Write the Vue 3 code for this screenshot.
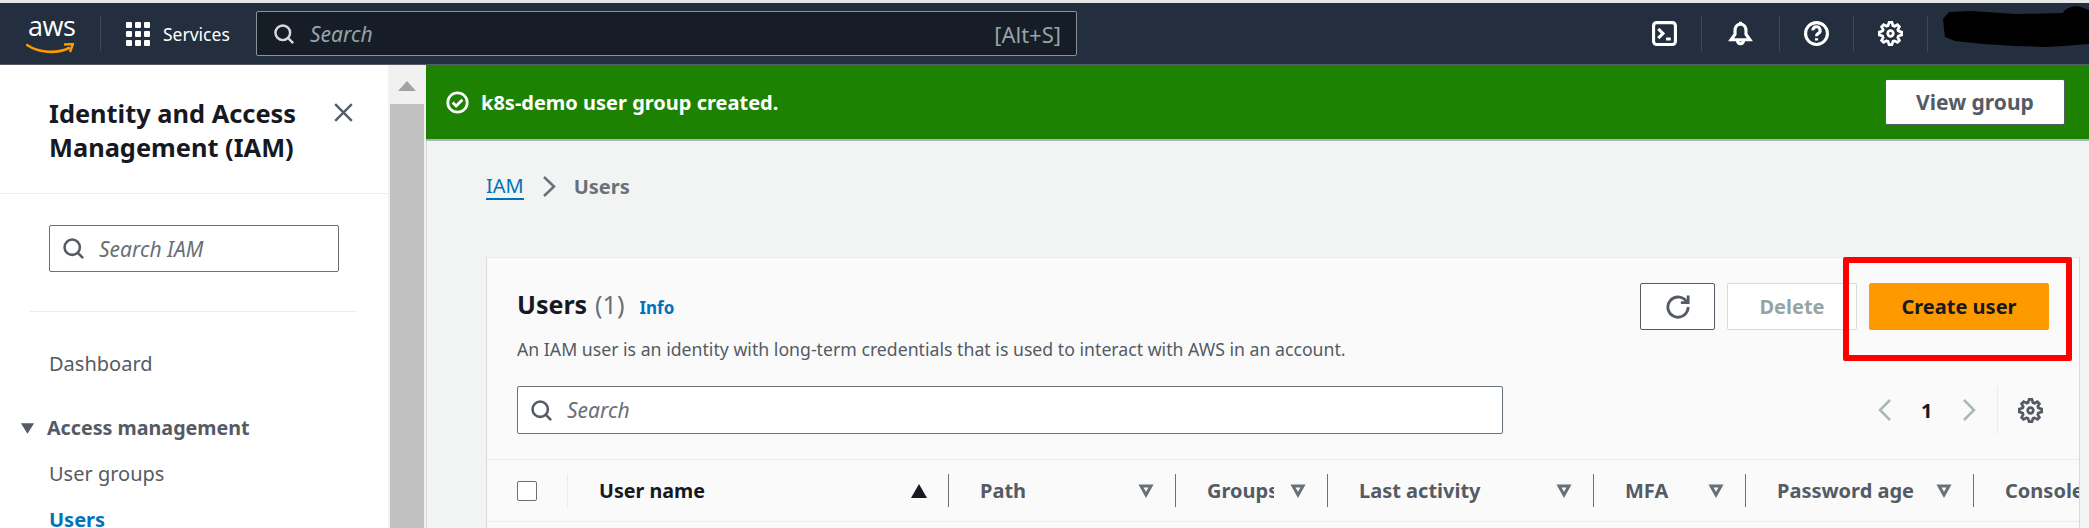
<script setup>
const navIcons = [
  { name: 'terminal', width: 'w75' },
  { name: 'bell', width: 'w78' },
  { name: 'help', width: 'w74' },
  { name: 'gear', width: 'w74' }
];

const columns = [
  { label: 'User name', sorted: true },
  { label: 'Path' },
  { label: 'Groups' },
  { label: 'Last activity' },
  { label: 'MFA' },
  { label: 'Password age' },
  { label: 'Console', last: true }
];

const gearPath = 'M13.3 5.2l1.1-2.1L13 1.7l-2.1 1.1c-.3-.2-.7-.3-1.1-.4L9 0H7l-.8 2.3c-.3.1-.7.2-1 .4L3.1 1.6 1.6 3.1l1.1 2.1c-.2.3-.3.7-.4 1L0 7v2l2.3.8c.1.4.3.7.4 1.1l-1.1 2.1 1.4 1.4 2.1-1.1c.3.2.7.3 1.1.4L7 16h2l.8-2.3c.4-.1.7-.3 1.1-.4l2.1 1.1 1.4-1.4-1.1-2.1c.2-.3.3-.7.4-1.1L16 9V7l-2.3-.8c-.1-.3-.2-.7-.4-1z';
</script>

<template>
  <div class="page">
    <div class="top-strip"></div>

    <header class="nav">
      <div class="logo">
        <span class="logo-text">aws</span>
        <svg class="smile" viewBox="0 0 48 12">
          <path d="M1 2c12 8 30 9 42 3" fill="none" stroke="#f90" stroke-width="2.6" stroke-linecap="round" />
          <path d="M38 1.500l9-.5-3 8" fill="none" stroke="#f90" stroke-width="2.4" />
        </svg>
      </div>
      <div class="nav-sep"></div>
      <svg class="grid-icon" viewBox="0 0 24 24" fill="#fff">
        <rect v-for="n in 9" :key="n" :x="((n - 1) % 3) * 9" :y="Math.floor((n - 1) / 3) * 9" width="6" height="6" rx="1" />
      </svg>
      <span class="services">Services</span>

      <div class="nav-search">
        <svg class="ico nav-search-ico" viewBox="-1 -1 18 18">
          <circle cx="7" cy="7" r="6" /><path d="m11 11 4.500 4.500" />
        </svg>
        <span class="nav-search-text">Search</span>
        <span class="shortcut">[Alt+S]</span>
      </div>

      <div class="nav-right">
        <div v-for="item in navIcons" :key="item.name" class="nav-cell" :class="item.width">
          <svg v-if="item.name === 'terminal'" class="ico nav-ico" viewBox="0 0 16 16">
            <rect x="1" y="1" width="14" height="14" rx="2" /><path d="m4 5 3 3-3 3M9 11.500h3" />
          </svg>
          <svg v-else-if="item.name === 'bell'" class="ico nav-ico" viewBox="0 0 16 16">
            <path d="M8 2C5.500 2 4.500 4 4.500 6v2.500L2 12h12l-2.500-3.500V6C11.500 4 10.500 2 8 2zM8 .5V2M6 12c0 1.700.9 2.500 2 2.500s2-.8 2-2.500" />
          </svg>
          <svg v-else-if="item.name === 'help'" class="ico nav-ico" viewBox="0 0 16 16">
            <circle cx="8" cy="8" r="7" /><path d="M5.700 6a2.300 2.300 0 1 1 3.400 2c-.8.4-1.100.9-1.100 1.700M8 11v1.500" />
          </svg>
          <svg v-else class="ico nav-ico" viewBox="-1 -1 18 18">
            <path :d="gearPath" /><circle cx="8" cy="8" r="2" />
          </svg>
        </div>
      </div>

      <svg class="scribble" viewBox="0 0 148 46">
        <path d="M2 14 8 7l22-1 44 3 48-1c2-5 12-8 18-6l8 3v34l-26 2-16 1-32-1-32-2-28-3-10-4L3 24z" fill="#000" />
      </svg>
    </header>

    <div class="body">
      <aside class="side">
        <div class="side-head">
          <h2 class="side-title">Identity and Access Management (IAM)</h2>
          <svg class="ico close" viewBox="0 0 16 16"><path d="m1 1 14 14M15 1 1 15" /></svg>
        </div>
        <div class="side-search">
          <svg class="ico field-ico" viewBox="-1 -1 18 18">
            <circle cx="7" cy="7" r="6" /><path d="m11 11 4.500 4.500" />
          </svg>
          <span class="placeholder">Search IAM</span>
        </div>
        <div class="side-rule"></div>
        <a class="side-link dash">Dashboard</a>
        <div class="side-group">
          <svg class="group-caret" viewBox="0 0 16 12"><path d="M1 1h14L8 12z" /></svg>
          <span>Access management</span>
        </div>
        <a class="side-link sub">User groups</a>
        <a class="side-link sub active">Users</a>
      </aside>

      <div class="scrollbar">
        <div class="scroll-btn"><svg viewBox="0 0 18 10"><path d="M0 10 9 0l9 10z" /></svg></div>
        <div class="scroll-thumb"></div>
      </div>

      <main class="main">
        <div class="banner">
          <svg class="ico banner-ico" viewBox="-1 -1 18 18">
            <circle cx="8" cy="8" r="7" /><path d="m4.500 8 2.500 2.500 4.500-4.500" />
          </svg>
          <span class="banner-text">k8s-demo user group created.</span>
          <button class="view-btn">View group</button>
        </div>

        <div class="content">
          <nav class="crumbs">
            <a class="crumb-link">IAM</a>
            <svg class="ico crumb-chev" viewBox="0 0 14 21"><path d="m2 1 10 9.500L2 20" /></svg>
            <span class="crumb-now">Users</span>
          </nav>

          <section class="card">
            <div class="card-head">
              <div class="card-title-block">
                <div class="card-title">
                  <strong>Users</strong>
                  <span class="count">(1)</span>
                  <a class="info">Info</a>
                </div>
                <p class="desc">An IAM user is an identity with long-term credentials that is used to interact with AWS in an account.</p>
              </div>
              <div class="actions">
                <button class="btn refresh">
                  <svg class="ico" viewBox="-1 -1 18 18">
                    <path d="M10 5h5V0" /><path d="M15 8a7 7 0 1 1-.7-3" />
                  </svg>
                </button>
                <button class="btn delete">Delete</button>
                <button class="btn create">Create user</button>
              </div>
            </div>

            <div class="tools">
              <div class="table-search">
                <svg class="ico field-ico" viewBox="-1 -1 18 18">
                  <circle cx="7" cy="7" r="6" /><path d="m11 11 4.500 4.500" />
                </svg>
                <span class="placeholder">Search</span>
              </div>
              <div class="pager">
                <svg class="ico chev" viewBox="0 0 14 22"><path d="M12 1 2 11l10 10" /></svg>
                <span class="page-no">1</span>
                <svg class="ico chev" viewBox="0 0 14 22"><path d="m2 1 10 10L2 21" /></svg>
                <div class="pager-gear">
                  <svg class="ico" viewBox="-1 -1 18 18">
                    <path :d="gearPath" /><circle cx="8" cy="8" r="2" />
                  </svg>
                </div>
              </div>
            </div>

            <div class="thead">
              <div class="cell check-cell"><span class="checkbox"></span></div>
              <div v-for="col in columns" :key="col.label" class="cell" :class="{ sorted: col.sorted, last: col.last }">
                <span class="col-label">{{ col.label }}</span>
                <svg v-if="col.sorted" class="sort-ico" viewBox="0 0 16 14"><path d="M8 0l8 14H0z" /></svg>
                <svg v-else-if="!col.last" class="ico filter-ico" viewBox="0 0 16 16"><path d="M3 3h10L8 12z" /></svg>
              </div>
            </div>
          </section>
        </div>
      </main>
    </div>

    <div class="highlight"></div>
  </div>
</template>

<style scoped>
.page {
  position: relative;
  width: 2089px;
  height: 528px;
  overflow: hidden;
  background: #f2f3f3;
  font-family: "Noto Sans", "Open Sans", sans-serif;
  color: #16191f;
}

.top-strip {
  height: 3px;
  background: #e6e8e8;
}

.ico {
  fill: none;
  stroke: currentColor;
  stroke-width: 2;
  display: block;
}

/* nav */
.nav {
  position: relative;
  display: flex;
  align-items: center;
  height: 62px;
  background: #232f3e;
  border-bottom: 1px solid #545b64;
  box-sizing: border-box;
  color: #fff;
}

.logo {
  position: relative;
  width: 48px;
  height: 34px;
  margin-left: 26px;
  margin-top: 2px;
}

.logo-text {
  position: absolute;
  top: -9px;
  left: 2px;
  font-family: "Open Sans", sans-serif;
  font-size: 27px;
  line-height: 34px;
  letter-spacing: -0.5px;
}

.smile {
  position: absolute;
  left: 0;
  bottom: -3px;
  width: 48px;
  height: 12px;
}

.nav-sep {
  width: 1px;
  height: 35px;
  margin-left: 26px;
  background: #414750;
}

.grid-icon {
  width: 24px;
  height: 24px;
  margin-left: 25px;
}

.services {
  width: 93px;
  margin-left: 13px;
  font-size: 17.500px;
}

.nav-search {
  display: flex;
  align-items: center;
  width: 821px;
  height: 45px;
  box-sizing: border-box;
  padding: 0 15px 0 16px;
  background: #161d26;
  border: 1px solid #879596;
  border-radius: 2px;
}

.nav-search-ico {
  width: 22px;
  height: 22px;
  color: #d5dbdb;
}

.nav-search-text {
  margin-left: 15px;
  font-size: 21px;
  font-style: italic;
  color: #95a5a6;
}

.shortcut {
  margin-left: auto;
  font-size: 22px;
  color: #95a5a6;
}

.nav-right {
  display: flex;
  align-items: center;
  margin-left: auto;
  margin-right: 161px;
}

.nav-cell {
  display: flex;
  justify-content: center;
  align-items: center;
  height: 36px;
  box-sizing: border-box;
  border-right: 1px solid #414750;
}

.w75 { width: 75px; }
.w78 { width: 78px; }
.w74 { width: 74px; }

.nav-ico {
  width: 25px;
  height: 25px;
}

.scribble {
  position: absolute;
  right: 0;
  top: 2px;
  width: 148px;
  height: 46px;
}

/* layout */
.body {
  display: flex;
  height: 463px;
}

/* side navigation */
.side {
  width: 388px;
  flex: none;
  background: #fff;
  display: flex;
  flex-direction: column;
}

.side > * {
  flex: none;
}

.side-head {
  display: flex;
  align-items: flex-start;
  height: 128px;
  box-sizing: content-box;
  border-bottom: 1px solid #eaeded;
  padding-left: 49px;
}

.side-title {
  width: 270px;
  margin: 31px 0 0;
  font-size: 25.400px;
  line-height: 34px;
  font-weight: 700;
}

.close {
  width: 19px;
  height: 19px;
  margin: 38px 0 0 15px;
  color: #545b64;
}

.side-search {
  display: flex;
  align-items: center;
  width: 290px;
  height: 47px;
  box-sizing: border-box;
  margin: 31px 0 0 49px;
  padding-left: 12px;
  border: 1px solid #687078;
  border-radius: 2px;
}

.field-ico {
  width: 23px;
  height: 23px;
  color: #545b64;
}

.placeholder {
  margin-left: 14px;
  font-size: 21px;
  font-style: italic;
  color: #687078;
}

.side-rule {
  width: 327px;
  height: 1px;
  margin: 39px 0 0 30px;
  background: #eaeded;
}

.side-link {
  margin-left: 49px;
  font-size: 20px;
  line-height: 24px;
  color: #545b64;
}

.dash {
  margin-top: 40px;
}

.sub {
  margin-top: 22px;
}

.active {
  color: #0073bb;
  font-weight: 700;
}

.side-group {
  display: flex;
  align-items: center;
  margin: 40px 0 0 20px;
  font-size: 19.700px;
  line-height: 24px;
  font-weight: 700;
  color: #545b64;
}

.group-caret {
  width: 15px;
  height: 12px;
  margin-right: 12px;
  fill: #545b64;
}

/* scrollbar */
.scrollbar {
  width: 38px;
  flex: none;
  background: #f1f1f1;
  padding: 0 2px;
  box-sizing: border-box;
}

.scroll-btn {
  height: 39px;
  display: flex;
  justify-content: center;
  padding-top: 16px;
  box-sizing: border-box;
}

.scroll-btn svg {
  width: 18px;
  height: 10px;
  fill: #a3a3a3;
}

.scroll-thumb {
  height: 424px;
  background: #c1c1c1;
}

/* main */
.main {
  flex: 1;
  min-width: 0;
  border-left: 1px solid #d5dbdb;
}

.banner {
  display: flex;
  align-items: center;
  height: 74px;
  margin-left: -1px;
  padding: 0 24px 0 19px;
  background: #1d8102;
  color: #fff;
  border-bottom: 2px solid #aab7b8;
}

.banner-ico {
  width: 25px;
  height: 25px;
}

.banner-text {
  margin-left: 11px;
  font-size: 20px;
  font-weight: 700;
}

.view-btn {
  width: 180px;
  height: 46px;
  margin-left: auto;
  background: #fff;
  border: 1px solid #545b64;
  border-radius: 2px;
  font: 700 21px "Noto Sans", sans-serif;
  color: #545b64;
}

.content {
  padding: 0 9px 0 59px;
}

.crumbs {
  display: flex;
  align-items: center;
  height: 116px;
  box-sizing: border-box;
  padding-bottom: 25px;
  font-size: 20px;
}

.crumb-link {
  color: #0073bb;
  border-bottom: 2px solid #0073bb;
  line-height: 24px;
}

.crumb-chev {
  width: 14px;
  height: 21px;
  margin: 0 18px;
  color: #687078;
  stroke-width: 2.500;
}

.crumb-now {
  font-weight: 700;
  color: #687078;
}

/* card */
.card {
  height: 320px;
  background: #fafafa;
  border-top: 1px solid #eaeded;
  border-left: 1px solid #d5dbdb;
  border-right: 1px solid #d5dbdb;
  overflow: hidden;
}

.card-head {
  display: flex;
  justify-content: space-between;
  padding: 25px 30px 0 30px;
}

.card-title-block {
  padding-top: 5px;
}

.card-title {
  display: flex;
  align-items: baseline;
  font-size: 25px;
  line-height: 32px;
}

.card-title strong {
  font-weight: 700;
}

.count {
  margin-left: 8px;
  color: #687078;
}

.info {
  margin-left: 15px;
  font-size: 17px;
  font-weight: 700;
  color: #0073bb;
}

.desc {
  margin: 13px 0 0;
  font-size: 17.700px;
  line-height: 24px;
  color: #545b64;
}

.actions {
  display: flex;
  align-items: flex-start;
  gap: 12px;
}

.btn {
  height: 47px;
  box-sizing: border-box;
  border-radius: 2px;
  font: 700 20px "Noto Sans", sans-serif;
}

.refresh {
  width: 75px;
  padding: 0;
  display: flex;
  justify-content: center;
  align-items: center;
  background: #fff;
  border: 1px solid #545b64;
  color: #545b64;
}

.refresh svg {
  width: 26px;
  height: 26px;
}

.delete {
  width: 130px;
  background: #fff;
  border: 1px solid #d5dbdb;
  color: #95a5a6;
}

.create {
  width: 180px;
  background: #f90;
  border: 1px solid #f90;
  color: #16191f;
}

.tools {
  display: flex;
  align-items: center;
  margin-top: 25px;
  padding: 0 36px 25px 30px;
}

.table-search {
  display: flex;
  align-items: center;
  width: 986px;
  height: 48px;
  box-sizing: border-box;
  padding-left: 12px;
  background: #fff;
  border: 1px solid #687078;
  border-radius: 2px;
}

.pager {
  display: flex;
  align-items: center;
  margin-left: auto;
  color: #aab7b8;
}

.chev {
  width: 14px;
  height: 22px;
  stroke-width: 2.500;
}

.page-no {
  width: 10px;
  margin: 0 31px 0 29px;
  font-size: 20px;
  font-weight: 700;
  color: #16191f;
}

.pager-gear {
  height: 48px;
  display: flex;
  align-items: center;
  margin-left: 21px;
  padding-left: 20px;
  border-left: 1px solid #eaeded;
  color: #545b64;
}

.pager-gear svg {
  width: 25px;
  height: 25px;
}

.thead {
  display: grid;
  grid-template-columns: 81px 381px 227px 152px 266px 152px 228px 1fr;
  align-items: center;
  height: 63px;
  box-sizing: border-box;
  border-top: 1px solid #eaeded;
  border-bottom: 1px solid #eaeded;
}

.cell {
  display: flex;
  align-items: center;
  min-width: 0;
  height: 33px;
  box-sizing: border-box;
  padding: 0 21px 0 31px;
  border-right: 1px solid #687078;
  font-size: 20px;
  font-weight: 700;
  color: #545b64;
}

.cell.last {
  border-right: none;
  padding-right: 0;
}

.check-cell {
  padding-left: 30px;
  border-right-color: #eaeded;
}

.checkbox {
  width: 20px;
  height: 20px;
  box-sizing: border-box;
  background: #fff;
  border: 1px solid #687078;
  border-radius: 2px;
}

.sorted {
  padding-left: 31px;
  font-size: 19.700px;
  color: #16191f;
}

.col-label {
  flex: 1;
  min-width: 0;
  overflow: hidden;
  white-space: nowrap;
  margin-right: 16px;
}

.last .col-label {
  margin-right: 0;
}

.sort-ico {
  width: 16px;
  height: 14px;
  flex: none;
  fill: #16191f;
}

.filter-ico {
  width: 16px;
  height: 16px;
  flex: none;
  color: #687078;
  stroke-width: 3;
}

/* red annotation drawn over the screenshot */
.highlight {
  position: absolute;
  left: 1843px;
  top: 257px;
  width: 229px;
  height: 104px;
  box-sizing: border-box;
  border: 6px solid #f00;
  border-radius: 2px;
}
</style>
